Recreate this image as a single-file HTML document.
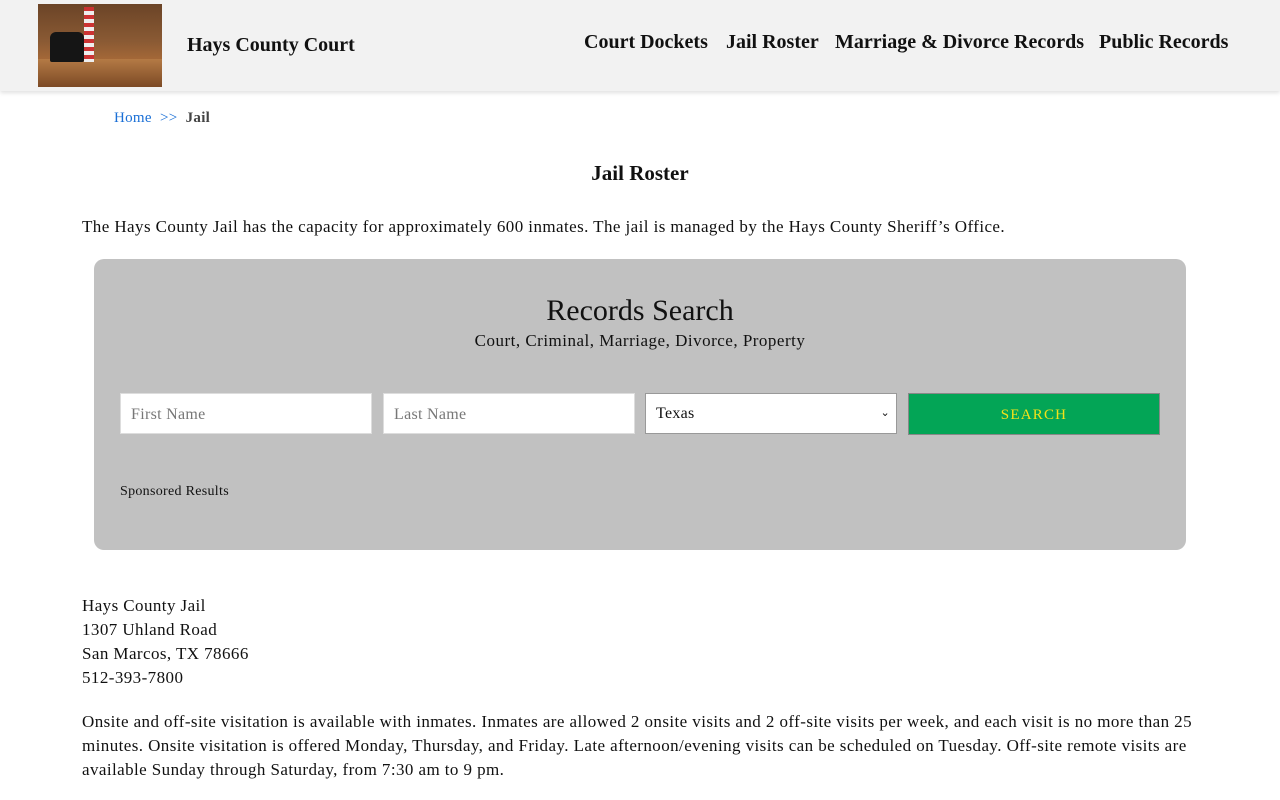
<!DOCTYPE html>
<html><head><meta charset="utf-8"><style>
*{box-sizing:border-box;margin:0;padding:0}
body{width:1280px;height:800px;overflow:hidden;background:#fff;font-family:"Liberation Serif","DejaVu Serif",serif;color:#111}
.hdr{position:absolute;left:0;top:0;width:1280px;height:91px;background:#f2f2f2;box-shadow:0 2px 4px rgba(0,0,0,.12)}
.logo{position:absolute;left:38px;top:4px;width:124px;height:83px;background:linear-gradient(180deg,#6b4427 0%,#8a5a34 45%,#a86a38 70%,#7a4a26 100%)}
.logo .chair{position:absolute;left:12px;top:28px;width:34px;height:30px;background:#151515;border-radius:6px 6px 2px 2px}
.logo .flag{position:absolute;left:46px;top:3px;width:10px;height:55px;background:repeating-linear-gradient(180deg,#c33 0 4px,#eee 4px 8px)}
.logo .desk{position:absolute;left:0;top:55px;width:124px;height:28px;background:linear-gradient(180deg,#b47a45,#7c4a25)}
.title{position:absolute;left:187px;top:34px;font-size:20px;font-weight:bold}
.nav{position:absolute;top:31px;font-size:20px;font-weight:bold}
.bc{position:absolute;left:114px;top:110px;font-size:15px;letter-spacing:.3px}
.bc a{color:#1a6fd6;text-decoration:none}
h1{position:absolute;left:0;width:1280px;text-align:center;top:161px;font-size:21px}
p{position:absolute;left:82px;font-size:17px;line-height:24px;width:1120px;letter-spacing:.42px}
.box{position:absolute;left:94px;top:259px;width:1092px;height:291px;background:#c1c1c1;border-radius:10px}
.box h2{position:absolute;top:35px;width:100%;text-align:center;font-size:30px;font-weight:normal}
.box .sub{position:absolute;top:72px;width:100%;text-align:center;font-size:17px;letter-spacing:.5px}
.in{position:absolute;top:134px;width:252px;height:41px;background:#fff;border:1px solid #ddd;font-size:16px;color:#777;padding:12px 10px;letter-spacing:.3px}
.btn{position:absolute;left:814px;top:134px;width:252px;height:42px;background:#03a556;border:1px solid #888;color:#f2e21a;text-align:center;font-size:15px;letter-spacing:1.2px;padding-top:13px}
.sp{position:absolute;left:26px;top:225px;font-size:14px;letter-spacing:.3px}
</style></head><body>
<div class="hdr">
<div class="logo"><div class="desk"></div><div class="chair"></div><div class="flag"></div></div>
<div class="title">Hays County Court</div>
<div class="nav" style="left:584px">Court Dockets</div>
<div class="nav" style="left:726px">Jail Roster</div>
<div class="nav" style="left:835px">Marriage &amp; Divorce Records</div>
<div class="nav" style="left:1099px">Public Records</div>
</div>
<div class="bc"><a>Home</a>&nbsp;&nbsp;<a>&gt;&gt;</a>&nbsp;&nbsp;<b style="color:#444">Jail</b></div>
<h1>Jail Roster</h1>
<p style="top:215px">The Hays County Jail has the capacity for approximately 600 inmates. The jail is managed by the Hays County Sheriff’s Office.</p>
<div class="box">
<h2>Records Search</h2>
<div class="sub">Court, Criminal, Marriage, Divorce, Property</div>
<div class="in" style="left:26px">First Name</div>
<div class="in" style="left:289px">Last Name</div>
<div class="in" style="left:551px;color:#111;border:1px solid #999;padding-top:11px">Texas<span style="position:absolute;right:6px;top:12px;font-size:11px">&#8964;</span></div>
<div class="btn">SEARCH</div>
<div class="sp">Sponsored Results</div>
</div>
<p style="top:594px">Hays County Jail<br>1307 Uhland Road<br>San Marcos, TX 78666<br>512-393-7800</p>
<p style="top:710px;width:1125px">Onsite and off-site visitation is available with inmates. Inmates are allowed 2 onsite visits and 2 off-site visits per week, and each visit is no more than 25 minutes. Onsite visitation is offered Monday, Thursday, and Friday. Late afternoon/evening visits can be scheduled on Tuesday. Off-site remote visits are available Sunday through Saturday, from 7:30 am to 9 pm.</p>
</body></html>
